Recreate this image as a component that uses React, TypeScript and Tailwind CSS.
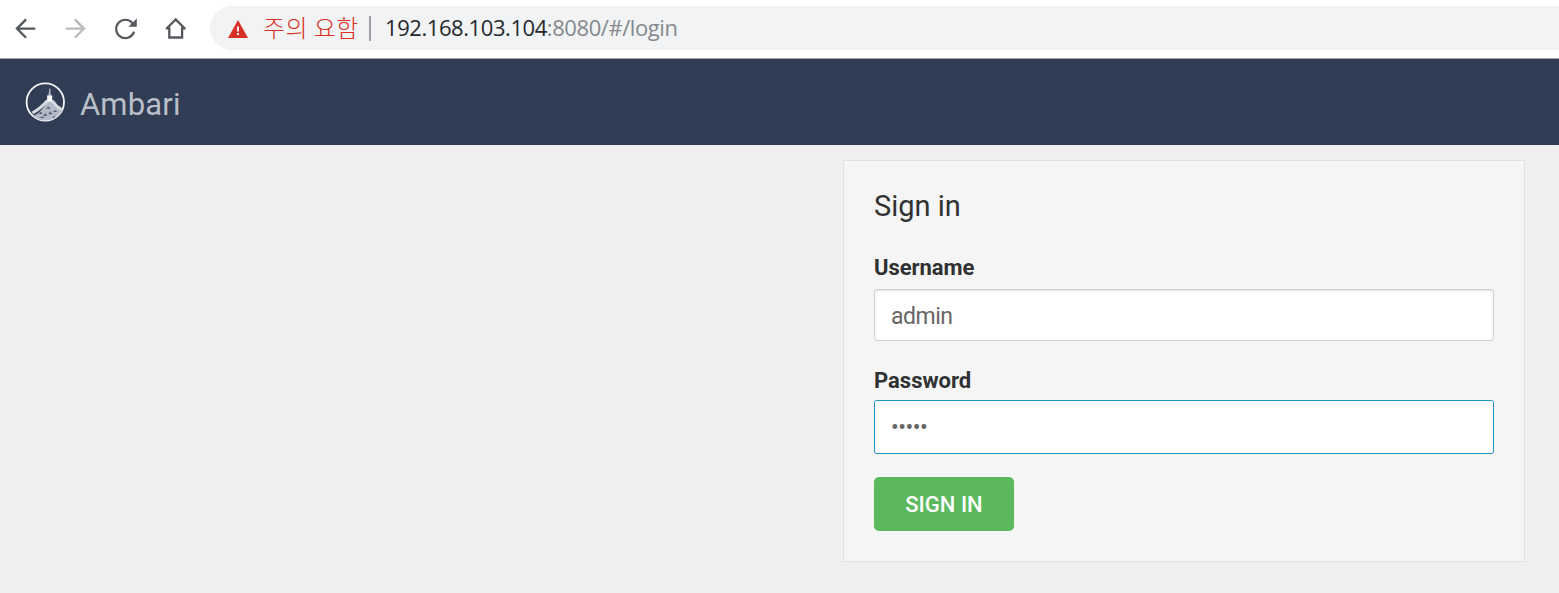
import React from "react";

function Toolbar() {
  return (
    <header className="flex h-[59px] shrink-0 items-start border-b border-[#a9a9a9] bg-white">
      <nav className="flex h-[57px] w-[210px] shrink-0 items-center gap-5 pl-[11px] text-[#55585d]">
        <svg className="size-[30px] shrink-0" viewBox="0 0 24 24" fill="currentColor">
          <path d="M19.400 10.700H7L12.700 4.900l-1.300-1.300-8 8 8 8 1.300-1.300-5.700-5.700h12.400z" />
        </svg>
        <svg className="size-[30px] shrink-0 text-[#bababc]" viewBox="0 0 24 24" fill="currentColor">
          <path d="M3.700 10.700h12.400l-5.700-5.800L11.700 3.600l8 8-8 8-1.300-1.300 5.700-5.700H3.700z" />
        </svg>
        <svg className="size-[30px] shrink-0" viewBox="0 0 30 30">
          <path d="M23.100 17.700a9.200 9.200 0 1 1-1.500-8.400" fill="none" stroke="currentColor" strokeWidth="2.200" />
          <path d="M25.800 4.500v8.300h-8.500z" fill="currentColor" />
        </svg>
        <svg className="size-[30px] shrink-0" viewBox="0 0 30 30" fill="none" stroke="currentColor" strokeWidth="2.300">
          <path d="M5.200 15 14.700 5.400l9.500 9.600M5 14.300h3.300v9.200h12.800v-9.200h3.400" />
        </svg>
      </nav>
      <div className="mt-[6px] flex h-11 flex-1 items-center rounded-l-full bg-[#f1f3f4] pl-[18px] font-['Open_Sans','Noto_Sans_CJK_KR',sans-serif] leading-none whitespace-nowrap">
        <svg className="mt-[2px] h-[18px] w-5 shrink-0" viewBox="0 0 20 18">
          <path d="M10 0 20 18H0z" fill="#d93025" />
          <path d="M9 6.500h2v5H9zM9 13h2v2H9z" fill="#f1f3f4" />
        </svg>
        <span className="mb-[3px] ml-[15px] w-[97px] font-['Noto_Sans_CJK_KR',sans-serif] text-[24px] font-light tracking-[0.400px] text-[#d93025]">주의 요함</span>
        <span className="ml-[9px] h-[25px] w-[2px] bg-[#9b9da0]" />
        <span className="mb-[2px] ml-[14px] text-[22px] tracking-[-0.430px] text-[#25282c]">
          192.168.103.104<span className="text-[#85898e]">:8080/#/login</span>
        </span>
      </div>
    </header>
  );
}

function AmbariLogo() {
  return (
    <svg className="size-10 shrink-0" viewBox="0 0 40 40">
      <circle cx="20.300" cy="20" r="18.700" fill="none" stroke="#f2f4f7" strokeWidth="1.800" />
      <path d="M24.300 6.500h1l.4 6 1.600 1.200v5c1 3.300 5.200 6.800 9.700 9.800-3 5.500-9 10-17 10-4.500 0-8.500-1.500-11.500-4.500 5-2.500 10-7.500 13.500-13.500v-6.800l1.600-1.200z" fill="#b4bbc6" />
      <path d="M22.500 18.500C18 24 13.500 27.500 7.500 31M27 18.500C30 23 33 25.500 36.500 27.500" fill="none" stroke="#d9dde3" strokeWidth="3" />
      <path d="M22.400 13.800h4.600v5.800h-4.600z" fill="#f7f8fa" />
      <path d="m13 32 3-2.500 1.500 2.500zm8-5.500 2.500-2 2 2.500zm2 5.500 2.500-2.500 2 3zm-9 4 3-1.500 3 1.500zm14-6 2-2 2.500 2zM18 34l2.500-3 1.500 3zm9 2 3-3-.5 3z" fill="#56627a" />
    </svg>
  );
}

export default function App() {
  return (
    <div className="flex h-[593px] flex-col overflow-hidden bg-[#efefef] font-[Roboto,sans-serif] text-[#303133]">
      <Toolbar />
      <div className="flex h-[86px] shrink-0 items-center bg-[#313d54] pl-[25px]">
        <AmbariLogo />
        <span className="mt-[4px] ml-[15px] text-[31px] leading-none tracking-[0.150px] text-[#b9bfc8]">Ambari</span>
      </div>
      <main className="flex justify-end pt-[15px] pr-[34px]">
        <form className="flex h-[402px] w-[682px] flex-col border border-[#e2e2e2] bg-[#f5f5f5] px-[30px] pt-[29px]" onSubmit={(e) => e.preventDefault()}>
          <h1 className="h-[64px] text-[29px] leading-[33px]">Sign in</h1>
          <label htmlFor="username" className="h-[35px] text-[22px] leading-[27px] font-bold tracking-[-0.050px]">Username</label>
          <input id="username" defaultValue="admin" className="h-[52px] shrink-0 rounded-[3px] border border-[#d0d3d7] bg-white px-4 pt-[3px] text-[23px] tracking-[-0.500px] text-[#666] shadow-[inset_0_1px_2px_rgba(0,0,0,0.12)] outline-none" />
          <label htmlFor="password" className="mt-[26px] h-[33px] text-[22px] leading-[27px] font-bold">Password</label>
          <input id="password" type="password" defaultValue="admin" className="h-[54px] shrink-0 rounded-[3px] border border-[#1e94c4] bg-white px-4 pt-px text-[23px] tracking-[-0.500px] text-[#666] outline-none" />
          <button className="mt-[23px] h-[54px] w-[140px] shrink-0 rounded-[5px] bg-[#5cb85c] text-[22px] font-medium text-white">SIGN IN</button>
        </form>
      </main>
    </div>
  );
}
